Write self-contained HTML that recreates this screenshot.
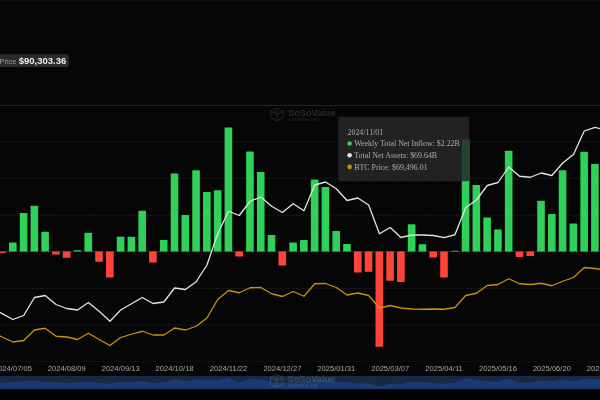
<!DOCTYPE html>
<html><head><meta charset="utf-8"><title>BTC ETF Weekly Net Inflow</title>
<style>
html,body{margin:0;padding:0;background:#060606;}
body{width:600px;height:400px;overflow:hidden;position:relative;font-family:"Liberation Sans",sans-serif;}
svg{position:absolute;left:0;top:0;display:block;will-change:transform;}
.ax{font-family:"Liberation Sans",sans-serif;font-size:7.6px;fill:#a8a8a8;}
.tt{font-family:"Liberation Serif",serif;font-size:7.92px;fill:#adadad;}
</style></head><body>
<svg width="600" height="400" viewBox="0 0 600 400">
<rect x="0" y="389" width="600" height="11" fill="#030303"/>
<line x1="0" x2="600" y1="105.40" y2="105.40" stroke="#3c3c3c" stroke-width="0.6"/>
<line x1="0" x2="600" y1="141.95" y2="141.95" stroke="#303030" stroke-width="0.6" stroke-dasharray="1.5 0.6"/>
<line x1="0" x2="600" y1="178.10" y2="178.10" stroke="#303030" stroke-width="0.6" stroke-dasharray="1.5 0.6"/>
<line x1="0" x2="600" y1="215.10" y2="215.10" stroke="#303030" stroke-width="0.6" stroke-dasharray="1.5 0.6"/>
<line x1="0" x2="600" y1="251.45" y2="251.45" stroke="#4a4a4a" stroke-width="0.6"/>
<line x1="0" x2="600" y1="288.30" y2="288.30" stroke="#303030" stroke-width="0.6" stroke-dasharray="1.5 0.6"/>
<line x1="0" x2="600" y1="325.00" y2="325.00" stroke="#303030" stroke-width="0.6" stroke-dasharray="1.5 0.6"/>
<line x1="0" x2="600" y1="361.40" y2="361.40" stroke="#242424" stroke-width="0.6" stroke-dasharray="1.5 0.6"/>
<line x1="0" x2="600" y1="0.3" y2="0.3" stroke="#1c1c1c" stroke-width="0.7" stroke-dasharray="1.2 0.8"/>
<g transform="translate(270.4,107.7)" opacity="0.8" fill="none" stroke="#333333" stroke-width="0.9" stroke-linejoin="round">
<path d="M6.6 0.4 L12.8 3.6 L12.8 10 L6.6 13.2 L0.4 10 L0.4 3.6 Z"/><path d="M0.4 3.6 L6.6 6.8 L12.8 3.6 M6.6 6.8 L6.6 13.2"/><path d="M8.6 3.4 L4.8 3.2 L4.6 5 L8 5.6 L8 7.6" stroke-width="0.7"/>
<text x="17.6" y="8.3" stroke="none" fill="#333333" font-family="Liberation Sans,sans-serif" font-size="9.6" font-weight="bold" textLength="47.6" lengthAdjust="spacingAndGlyphs">SoSoValue</text>
<text x="17.8" y="13.2" stroke="none" fill="#333333" font-family="Liberation Sans,sans-serif" font-size="4.6">sosovalue.com</text></g>
<rect x="-1.78" y="251.5" width="7.6" height="1.50" fill="#ff453a" rx="0.6"/>
<rect x="9.00" y="242.50" width="7.6" height="9.00" fill="#30d158" rx="0.6"/>
<rect x="19.78" y="213.00" width="7.6" height="38.50" fill="#30d158" rx="0.6"/>
<rect x="30.56" y="205.75" width="7.6" height="45.75" fill="#30d158" rx="0.6"/>
<rect x="41.34" y="231.75" width="7.6" height="19.75" fill="#30d158" rx="0.6"/>
<rect x="52.12" y="251.5" width="7.6" height="3.00" fill="#ff453a" rx="0.6"/>
<rect x="62.90" y="251.5" width="7.6" height="6.25" fill="#ff453a" rx="0.6"/>
<rect x="73.68" y="250.25" width="7.6" height="1.25" fill="#30d158" rx="0.6"/>
<rect x="84.46" y="232.75" width="7.6" height="18.75" fill="#30d158" rx="0.6"/>
<rect x="95.24" y="251.5" width="7.6" height="10.25" fill="#ff453a" rx="0.6"/>
<rect x="106.02" y="251.5" width="7.6" height="26.00" fill="#ff453a" rx="0.6"/>
<rect x="116.80" y="236.75" width="7.6" height="14.75" fill="#30d158" rx="0.6"/>
<rect x="127.58" y="236.75" width="7.6" height="14.75" fill="#30d158" rx="0.6"/>
<rect x="138.36" y="210.75" width="7.6" height="40.75" fill="#30d158" rx="0.6"/>
<rect x="149.14" y="251.5" width="7.6" height="11.00" fill="#ff453a" rx="0.6"/>
<rect x="159.92" y="240.00" width="7.6" height="11.50" fill="#30d158" rx="0.6"/>
<rect x="170.70" y="173.50" width="7.6" height="78.00" fill="#30d158" rx="0.6"/>
<rect x="181.48" y="215.00" width="7.6" height="36.50" fill="#30d158" rx="0.6"/>
<rect x="192.26" y="170.25" width="7.6" height="81.25" fill="#30d158" rx="0.6"/>
<rect x="203.04" y="192.00" width="7.6" height="59.50" fill="#30d158" rx="0.6"/>
<rect x="213.82" y="190.25" width="7.6" height="61.25" fill="#30d158" rx="0.6"/>
<rect x="224.60" y="127.50" width="7.6" height="124.00" fill="#30d158" rx="0.6"/>
<rect x="235.38" y="251.5" width="7.6" height="5.00" fill="#ff453a" rx="0.6"/>
<rect x="246.16" y="151.50" width="7.6" height="100.00" fill="#30d158" rx="0.6"/>
<rect x="256.94" y="172.00" width="7.6" height="79.50" fill="#30d158" rx="0.6"/>
<rect x="267.72" y="235.00" width="7.6" height="16.50" fill="#30d158" rx="0.6"/>
<rect x="278.50" y="251.5" width="7.6" height="14.00" fill="#ff453a" rx="0.6"/>
<rect x="289.28" y="242.50" width="7.6" height="9.00" fill="#30d158" rx="0.6"/>
<rect x="300.06" y="240.00" width="7.6" height="11.50" fill="#30d158" rx="0.6"/>
<rect x="310.84" y="179.50" width="7.6" height="72.00" fill="#30d158" rx="0.6"/>
<rect x="321.62" y="187.00" width="7.6" height="64.50" fill="#30d158" rx="0.6"/>
<rect x="332.40" y="231.00" width="7.6" height="20.50" fill="#30d158" rx="0.6"/>
<rect x="343.18" y="244.00" width="7.6" height="7.50" fill="#30d158" rx="0.6"/>
<rect x="353.96" y="251.5" width="7.6" height="21.00" fill="#ff453a" rx="0.6"/>
<rect x="364.74" y="251.5" width="7.6" height="20.25" fill="#ff453a" rx="0.6"/>
<rect x="375.52" y="251.5" width="7.6" height="95.25" fill="#ff453a" rx="0.6"/>
<rect x="386.30" y="251.5" width="7.6" height="29.25" fill="#ff453a" rx="0.6"/>
<rect x="397.08" y="251.5" width="7.6" height="30.50" fill="#ff453a" rx="0.6"/>
<rect x="407.86" y="224.25" width="7.6" height="27.25" fill="#30d158" rx="0.6"/>
<rect x="418.64" y="244.25" width="7.6" height="7.25" fill="#30d158" rx="0.6"/>
<rect x="429.42" y="251.5" width="7.6" height="6.00" fill="#ff453a" rx="0.6"/>
<rect x="440.20" y="251.5" width="7.6" height="26.00" fill="#ff453a" rx="0.6"/>
<rect x="450.98" y="250.75" width="7.6" height="0.75" fill="#30d158" rx="0.6"/>
<rect x="461.76" y="139.50" width="7.6" height="112.00" fill="#30d158" rx="0.6"/>
<rect x="472.54" y="185.00" width="7.6" height="66.50" fill="#30d158" rx="0.6"/>
<rect x="483.32" y="217.50" width="7.6" height="34.00" fill="#30d158" rx="0.6"/>
<rect x="494.10" y="229.50" width="7.6" height="22.00" fill="#30d158" rx="0.6"/>
<rect x="504.88" y="150.75" width="7.6" height="100.75" fill="#30d158" rx="0.6"/>
<rect x="515.66" y="251.5" width="7.6" height="5.50" fill="#ff453a" rx="0.6"/>
<rect x="526.44" y="251.5" width="7.6" height="4.50" fill="#ff453a" rx="0.6"/>
<rect x="537.22" y="200.75" width="7.6" height="50.75" fill="#30d158" rx="0.6"/>
<rect x="548.00" y="214.00" width="7.6" height="37.50" fill="#30d158" rx="0.6"/>
<rect x="558.78" y="170.25" width="7.6" height="81.25" fill="#30d158" rx="0.6"/>
<rect x="569.56" y="223.50" width="7.6" height="28.00" fill="#30d158" rx="0.6"/>
<rect x="580.34" y="151.75" width="7.6" height="99.75" fill="#30d158" rx="0.6"/>
<rect x="591.12" y="164.00" width="7.6" height="87.50" fill="#30d158" rx="0.6"/>
<rect x="601.90" y="200.00" width="7.6" height="51.50" fill="#30d158" rx="0.6"/>
<polyline points="-8.66,332.00 2.12,337.00 12.90,342.00 23.68,340.50 34.46,330.00 45.24,328.25 56.02,336.25 66.80,337.00 77.58,339.50 88.36,333.25 99.14,339.50 109.92,345.50 120.70,337.50 131.48,334.25 142.26,331.25 153.04,335.00 163.82,335.00 174.60,328.00 185.38,330.00 196.16,326.25 206.94,318.00 217.72,299.50 228.50,290.50 239.28,292.75 250.06,287.75 260.84,287.50 271.62,293.75 282.40,296.50 293.18,291.50 303.96,296.25 314.74,283.75 325.52,283.50 336.30,287.50 347.08,295.00 357.86,293.00 368.64,295.50 379.42,308.00 390.20,305.50 400.98,308.00 411.76,309.00 422.54,309.25 433.32,309.00 444.10,309.25 454.88,307.50 465.66,295.50 476.44,293.25 487.22,285.50 498.00,284.50 508.78,278.75 519.56,283.75 530.34,284.50 541.12,283.25 551.90,285.75 562.68,281.25 573.46,277.50 584.24,267.50 595.02,268.50 605.80,270.10" fill="none" stroke="#cc900c" stroke-width="1.3" stroke-linejoin="round" stroke-linecap="round"/>
<polyline points="-8.66,307.70 2.12,313.60 12.90,319.50 23.68,315.50 34.46,297.50 45.24,295.50 56.02,304.50 66.80,308.50 77.58,310.00 88.36,302.50 99.14,311.25 109.92,321.25 120.70,310.00 131.48,303.75 142.26,297.50 153.04,303.50 163.82,302.00 174.60,288.00 185.38,289.50 196.16,281.75 206.94,265.00 217.72,233.75 228.50,211.25 239.28,215.50 250.06,201.25 260.84,197.00 271.62,206.25 282.40,212.50 293.18,203.75 303.96,210.75 314.74,185.00 325.52,182.00 336.30,188.75 347.08,200.50 357.86,198.00 368.64,205.00 379.42,233.75 390.20,227.50 400.98,237.50 411.76,235.00 422.54,235.00 433.32,235.50 444.10,237.60 454.88,234.75 465.66,207.75 476.44,200.00 487.22,185.50 498.00,182.50 508.78,167.00 519.56,176.25 530.34,177.25 541.12,173.00 551.90,175.50 562.68,163.00 573.46,154.50 584.24,131.00 595.02,127.30 605.80,130.00" fill="none" stroke="#e4e4e4" stroke-width="1.3" stroke-linejoin="round" stroke-linecap="round"/>
<text class="ax" x="12.90" y="370.6" text-anchor="middle">2024/07/05</text>
<text class="ax" x="66.80" y="370.6" text-anchor="middle">2024/08/09</text>
<text class="ax" x="120.70" y="370.6" text-anchor="middle">2024/09/13</text>
<text class="ax" x="174.60" y="370.6" text-anchor="middle">2024/10/18</text>
<text class="ax" x="228.50" y="370.6" text-anchor="middle">2024/11/22</text>
<text class="ax" x="282.40" y="370.6" text-anchor="middle">2024/12/27</text>
<text class="ax" x="336.30" y="370.6" text-anchor="middle">2025/01/31</text>
<text class="ax" x="390.20" y="370.6" text-anchor="middle">2025/03/07</text>
<text class="ax" x="444.10" y="370.6" text-anchor="middle">2025/04/11</text>
<text class="ax" x="498.00" y="370.6" text-anchor="middle">2025/05/16</text>
<text class="ax" x="551.90" y="370.6" text-anchor="middle">2025/06/20</text>
<text class="ax" x="605.80" y="370.6" text-anchor="middle">2025/07/25</text>
<rect x="0" y="376" width="600" height="13.1" fill="#1a2843"/>
<path d="M-2,389.1 L-2,383.26 L2.12,383.26 L12.90,382.84 L23.68,381.64 L34.46,381.35 L45.24,382.40 L56.02,383.32 L66.80,383.45 L77.58,383.15 L88.36,382.44 L99.14,383.62 L109.92,384.25 L120.70,382.60 L131.48,382.60 L142.26,381.55 L153.04,383.65 L163.82,382.73 L174.60,380.04 L185.38,381.72 L196.16,379.91 L206.94,380.79 L217.72,380.72 L228.50,378.18 L239.28,383.40 L250.06,379.15 L260.84,379.98 L271.62,382.53 L282.40,383.77 L293.18,382.84 L303.96,382.73 L314.74,380.28 L325.52,380.59 L336.30,382.37 L347.08,382.90 L357.86,384.05 L368.64,384.02 L379.42,387.06 L390.20,384.38 L400.98,384.44 L411.76,382.10 L422.54,382.91 L433.32,383.44 L444.10,384.25 L454.88,383.17 L465.66,378.66 L476.44,380.51 L487.22,381.82 L498.00,382.31 L508.78,379.12 L519.56,383.42 L530.34,383.38 L541.12,381.14 L551.90,381.68 L562.68,379.91 L573.46,382.07 L584.24,379.16 L595.02,379.66 L605.80,381.11 L602,389.1 Z" fill="#1d3972"/>
<path d="M2.12,383.26 L12.90,382.84 L23.68,381.64 L34.46,381.35 L45.24,382.40 L56.02,383.32 L66.80,383.45 L77.58,383.15 L88.36,382.44 L99.14,383.62 L109.92,384.25 L120.70,382.60 L131.48,382.60 L142.26,381.55 L153.04,383.65 L163.82,382.73 L174.60,380.04 L185.38,381.72 L196.16,379.91 L206.94,380.79 L217.72,380.72 L228.50,378.18 L239.28,383.40 L250.06,379.15 L260.84,379.98 L271.62,382.53 L282.40,383.77 L293.18,382.84 L303.96,382.73 L314.74,380.28 L325.52,380.59 L336.30,382.37 L347.08,382.90 L357.86,384.05 L368.64,384.02 L379.42,387.06 L390.20,384.38 L400.98,384.44 L411.76,382.10 L422.54,382.91 L433.32,383.44 L444.10,384.25 L454.88,383.17 L465.66,378.66 L476.44,380.51 L487.22,381.82 L498.00,382.31 L508.78,379.12 L519.56,383.42 L530.34,383.38 L541.12,381.14 L551.90,381.68 L562.68,379.91 L573.46,382.07 L584.24,379.16 L595.02,379.66 L605.80,381.11" fill="none" stroke="#22458a" stroke-width="0.6"/>
<g transform="translate(270,374)" opacity="0.42" fill="none" stroke="#6f7f9c" stroke-width="0.9" stroke-linejoin="round">
<path d="M6.6 0.4 L12.8 3.6 L12.8 10 L6.6 13.2 L0.4 10 L0.4 3.6 Z"/><path d="M0.4 3.6 L6.6 6.8 L12.8 3.6 M6.6 6.8 L6.6 13.2"/><path d="M8.6 3.4 L4.8 3.2 L4.6 5 L8 5.6 L8 7.6" stroke-width="0.7"/>
<text x="17.6" y="8.3" stroke="none" fill="#6f7f9c" font-family="Liberation Sans,sans-serif" font-size="9.6" font-weight="bold" textLength="47.6" lengthAdjust="spacingAndGlyphs">SoSoValue</text>
<text x="17.8" y="13.2" stroke="none" fill="#6f7f9c" font-family="Liberation Sans,sans-serif" font-size="4.6">sosovalue.com</text></g>
<rect x="338.25" y="116.75" width="131" height="64.5" rx="2" fill="rgb(40,40,40)" fill-opacity="0.85"/>
<text class="tt" x="347.5" y="134.50">2024/11/01</text>
<circle cx="349.6" cy="143.57" r="2.3" fill="#30d158"/>
<text class="tt" x="354.25" y="146.17">Weekly Total Net Inflow: $2.22B</text>
<circle cx="349.6" cy="155.24" r="2.3" fill="#e6e6e6"/>
<text class="tt" x="354.25" y="157.84">Total Net Assets: $69.64B</text>
<circle cx="349.6" cy="166.91" r="2.3" fill="#cc900c"/>
<text class="tt" x="354.25" y="169.51">BTC Price: $69,496.01</text>
<rect x="-3" y="54.2" width="71.7" height="12.8" rx="2" fill="#2a2a2a"/>
<text x="-0.6" y="63.5" font-family="Liberation Sans,sans-serif" font-size="7.5" fill="#9a9a9a">Price</text>
<text x="18.7" y="64.2" font-family="Liberation Sans,sans-serif" font-size="9.5" font-weight="bold" fill="#ececec">$90,303.36</text>
</svg>

</body></html>
